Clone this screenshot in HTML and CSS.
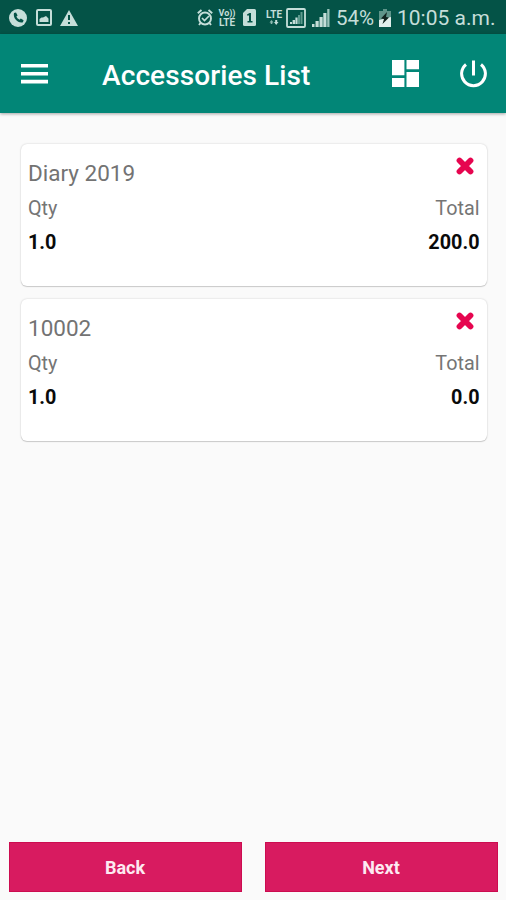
FILE: index.html
```
<!DOCTYPE html>
<html lang="en">
<head>
<meta charset="utf-8">
<meta name="viewport" content="width=device-width, initial-scale=1">
<title>Accessories List</title>
<link rel="stylesheet" href="styles.css">
</head>
<body>
<div class="statusbar">
  <svg class="call" width="18" height="18" viewBox="0 0 18 18"><circle cx="9" cy="9" r="9" fill="#c5ded9"/><path d="M5 4l2-.6 1.600 3-1.200 1.200c.7 1.500 1.700 2.500 3.100 3.100l1.300-1.200 2.800 1.700-.7 2C9.500 14.600 3.600 9.500 5 4z" fill="#045347"/></svg>
  <svg class="photo" width="16" height="17" viewBox="0 0 16 17"><rect x="1" y="1" width="14" height="15" rx="1" fill="none" stroke="#c5ded9" stroke-width="2"/><path d="M3.500 13V10l2-1.500h1.500L10 7l2.500 2.500V13z" fill="#c5ded9"/></svg>
  <svg class="warn" width="18" height="16" viewBox="0 0 18 16"><path d="M9 0l9 16H0z" fill="#c5ded9"/><path d="M8 5h2v5H8zM8 12h2v2H8z" fill="#045347"/></svg>
  <div class="status-right">
    <svg class="alarm" width="16" height="17" viewBox="0 0 16 17" fill="none" stroke="#c5ded9"><circle cx="8" cy="9.500" r="6" stroke-width="1.900"/><path d="M.8 4.200l3.700-3.200M15.200 4.200l-3.700-3.200M3.500 14l-1.500 2M12.500 14l1.500 2" stroke-width="1.900"/><path d="M5 9l2.500 2.500L12 7" stroke-width="1.700"/></svg>
    <div class="volte"><span>Vo))</span><span class="big">LTE</span></div>
    <svg class="sim" width="13" height="17" viewBox="0 0 13 17"><path d="M4 0h7.500Q13 0 13 1.500v14q0 1.500-1.500 1.500h-10Q0 17 0 15.500V4z" fill="#c5ded9"/><path d="M4 5.500L6.500 4H8v8h1.500v1.500h-5V12H6V6.500H4z" fill="#045347"/></svg>
    <div class="lte"><span class="big">LTE</span><svg width="12" height="6" viewBox="0 0 12 6"><path d="M3.500 1L5.500 3.500H4.300V5H2.700V3.500H1.500z" fill="#8dbab1"/><path d="M7.200 1h2v2h1.300L8.200 6 6 3h1.200z" fill="#c5ded9"/></svg></div>
    <svg class="boxed" width="20" height="20" viewBox="0 0 20 20"><rect x="1" y="1" width="18" height="18" rx="1" fill="none" stroke="#c5ded9" stroke-width="1.800"/><path d="M4 16v-2h2v2zM6.600 16v-4H9v4zM9.400 16V9.500h2.200V16z" fill="#c5ded9"/><path d="M12 16V7h2v9zM14.500 16V4h2v12z" fill="#5c9a8d"/></svg>
    <svg class="signal" width="18" height="18" viewBox="0 0 18 18"><path d="M0 18v-3h2.500v3zM3.500 18v-6h3.200v6zM7.500 18V8h3.200v10zM11.300 18V4h3.200v14z" fill="#c5ded9"/><path d="M15.200 18V0h2.300v18z" fill="#9ac4bb"/></svg>
    <span class="percent">54%</span>
    <svg class="battery" width="12" height="18" viewBox="0 0 12 18"><path d="M4 0h4v2h4v16H0V2h4z" fill="#5f958a"/><path d="M0 11l12-3v10H0z" fill="#e0eeeb"/><path d="M8 3L2 9.500l3 .5-1.500 5L10 8.500 7 8z" fill="#10241f"/></svg>
    <span class="clock">10:05 a.m.</span>
  </div>
</div>
<div class="appbar">
  <svg class="menu" width="27" height="20" viewBox="0 0 27 20"><path d="M0 0h27v3.600H0zM0 7.900h27v3.600H0zM0 15.800h27v3.600H0z" fill="#fff"/></svg>
  <h1>Accessories List</h1>
  <svg class="dashboard" width="27" height="27" viewBox="0 0 27 27"><path d="M0 0h12.400v15.200H0zM0 18h12.400v9H0zM14.500 0H27v9.200H14.500zM14.500 12H27V27H14.500z" fill="#fff"/></svg>
  <svg class="power" width="27" height="28" viewBox="0 0 27 28" fill="none" stroke="#fff" stroke-width="3"><path d="M13.500 0.500v15M6 4.500a11.900 11.900 0 1 0 15 0"/></svg>
</div>
<div class="list">
  <div class="card">
    <svg class="remove" width="18" height="18" viewBox="0 0 18 18"><path d="M3.500 3.500l11 11M14.500 3.500l-11 11" stroke="#e6054f" stroke-width="5.800" stroke-linecap="round"/></svg>
    <h2>Diary 2019</h2>
    <div class="row label"><span>Qty</span><span>Total</span></div>
    <div class="row value"><span>1.0</span><span>200.0</span></div>
  </div>
  <div class="card">
    <svg class="remove" width="18" height="18" viewBox="0 0 18 18"><path d="M3.500 3.500l11 11M14.500 3.500l-11 11" stroke="#e6054f" stroke-width="5.800" stroke-linecap="round"/></svg>
    <h2>10002</h2>
    <div class="row label"><span>Qty</span><span>Total</span></div>
    <div class="row value"><span>1.0</span><span>0.0</span></div>
  </div>
</div>
<div class="buttons">
  <button>Back</button>
  <button>Next</button>
</div>
</body>
</html>
```
FILE: styles.css
```
* {
  box-sizing: border-box;
}
body {
  margin: 0;
  height: 900px;
  display: flex;
  flex-direction: column;
  overflow: hidden;
  background: #fafafa;
  font-family: Roboto, sans-serif;
}
svg {
  display: block;
  flex: none;
}
.statusbar {
  height: 34px;
  flex: none;
  display: flex;
  align-items: center;
  padding: 1px 10px 0 9px;
  background: #045347;
  color: #c5ded9;
}
.photo {
  margin-left: 9px;
}
.warn {
  margin-left: 8px;
}
.status-right {
  display: flex;
  align-items: center;
  margin-left: auto;
}
.volte, .lte {
  display: flex;
  flex-direction: column;
  align-items: center;
  font-size: 9px;
  font-weight: 700;
  line-height: 9px;
}
.big {
  font-size: 10px;
}
.volte {
  width: 18px;
  margin-left: 5px;
}
.sim {
  margin-left: 7px;
}
.lte {
  width: 18px;
  margin-left: 9px;
}
.boxed {
  margin-left: 3px;
}
.signal {
  margin-left: 6px;
}
.percent {
  width: 39px;
  margin-left: 6px;
  font-size: 20.500px;
  white-space: nowrap;
}
.battery {
  margin-left: 4px;
}
.clock {
  width: 99px;
  margin-left: 6px;
  font-size: 21px;
  white-space: nowrap;
}
.appbar {
  height: 79px;
  flex: none;
  display: flex;
  align-items: center;
  padding: 0 19px 0 21px;
  background: #028677;
  box-shadow: 0 1px 3px rgba(0, 0, 0, .35);
}
h1 {
  margin: 4px 0 0 54px;
  color: #fff;
  font-size: 28px;
  font-weight: 500;
  letter-spacing: .1px;
  white-space: nowrap;
}
.dashboard {
  margin-left: auto;
}
.power {
  margin-left: 41px;
}
.list {
  flex: 1;
  display: flex;
  flex-direction: column;
  gap: 13px;
  padding: 31px 19px 0 21px;
}
.card {
  position: relative;
  height: 142px;
  padding: 14px 7px 0;
  background: #fff;
  border-radius: 6px;
  box-shadow: 0 0 2px rgba(0, 0, 0, .2), 0 1px 1px rgba(0, 0, 0, .15);
}
.remove {
  position: absolute;
  top: 13px;
  right: 13px;
}
h2 {
  margin: 0;
  color: #737373;
  font-size: 22.500px;
  font-weight: 400;
  line-height: 30px;
}
.row {
  display: flex;
  justify-content: space-between;
  padding-right: .5px;
}
.label {
  margin-top: 8px;
  color: #757575;
  font-size: 19.800px;
  line-height: 26px;
}
.value {
  margin-top: 8px;
  color: #0a0a0a;
  font-size: 19.800px;
  font-weight: 700;
  line-height: 26px;
}
.buttons {
  display: grid;
  grid-template-columns: 1fr 1fr;
  gap: 23px;
  padding: 0 8px 8px 9px;
}
button {
  height: 50px;
  padding: 0 1px 0 0;
  border: 1px solid #cc0c50;
  background: #d81b60;
  color: #fdeaf1;
  font-family: inherit;
  font-size: 18px;
  font-weight: 700;
}
```
